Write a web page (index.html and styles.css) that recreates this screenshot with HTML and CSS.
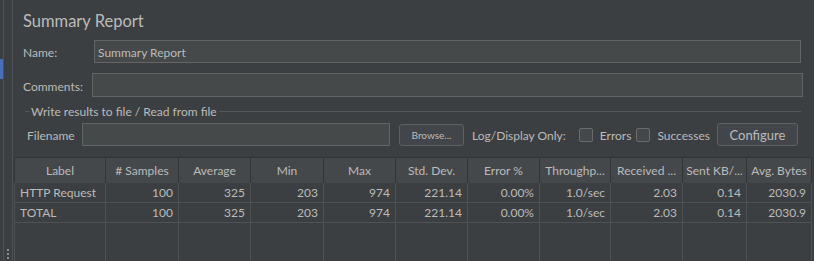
FILE: index.html
```html
<!DOCTYPE html>
<html>
<head>
<meta charset="utf-8">
<link rel="stylesheet" href="styles.css">
</head>
<body>
<div class="app">
  <div class="sidebar">
    <div class="side-line"><div class="side-top"></div><div class="side-sel"></div><div class="side-rest"></div></div>
    <div class="side-gap"><div class="dots"><span></span><span></span><span></span></div></div>
  </div>
  <div class="main">
    <div class="form">
      <div class="title">Summary Report</div>
      <div class="row row-name">
        <span class="lbl lbl-name">Name:</span>
        <div class="input input-name">Summary Report</div>
      </div>
      <div class="row row-comments">
        <span class="lbl lbl-comments">Comments:</span>
        <div class="input input-comments"></div>
      </div>
      <div class="group">
        <div class="legend"><span class="leg-tick"></span><span class="leg-text">Write results to file / Read from file</span><span class="leg-line"></span></div>
        <div class="row row-file">
          <span class="lbl lbl-file">Filename</span>
          <div class="input input-file"></div>
          <div class="btn btn-browse">Browse...</div>
          <span class="lbl lbl-log">Log/Display Only:</span>
          <span class="check"></span>
          <span class="lbl lbl-err">Errors</span>
          <span class="check"></span>
          <span class="lbl lbl-succ">Successes</span>
          <div class="btn btn-conf">Configure</div>
        </div>
      </div>
    </div>
    <div class="table-wrap">
      <table class="grid">
        <colgroup>
          <col style="width:91px"><col style="width:73px"><col style="width:72px"><col style="width:73px"><col style="width:72px"><col style="width:72px"><col style="width:72px"><col style="width:71px"><col style="width:72px"><col style="width:64px"><col style="width:65px">
        </colgroup>
        <thead>
          <tr><th>Label</th><th># Samples</th><th>Average</th><th>Min</th><th>Max</th><th>Std. Dev.</th><th>Error %</th><th>Throughp...</th><th>Received ...</th><th>Sent KB/...</th><th>Avg. Bytes</th></tr>
        </thead>
        <tbody>
          <tr><td class="l">HTTP Request</td><td>100</td><td>325</td><td>203</td><td>974</td><td>221.14</td><td>0.00%</td><td>1.0/sec</td><td>2.03</td><td>0.14</td><td>2030.9</td></tr>
          <tr><td class="l">TOTAL</td><td>100</td><td>325</td><td>203</td><td>974</td><td>221.14</td><td>0.00%</td><td>1.0/sec</td><td>2.03</td><td>0.14</td><td>2030.9</td></tr>
          <tr class="filler"><td></td><td></td><td></td><td></td><td></td><td></td><td></td><td></td><td></td><td></td><td></td></tr>
        </tbody>
      </table>
    </div>
  </div>
</div>
</body>
</html>
```

FILE: styles.css
```css
html, body {
  margin: 0;
  padding: 0;
  background: #3c3f41;
}
body {
  width: 814px;
  height: 261px;
  overflow: hidden;
  font-family: Lato, "Noto Sans", sans-serif;
  font-size: 12px;
  color: #bbbbbb;
}
.app {
  display: flex;
  height: 261px;
}
.sidebar {
  width: 12px;
  display: flex;
  border-right: 1px solid #4e5153;
}
.side-line {
  width: 3px;
  display: flex;
  flex-direction: column;
  border-right: 1px solid #4e5153;
}
.side-top { height: 59px; }
.side-sel { height: 20px; background: #4a6fb5; }
.side-rest { flex: 1; }
.side-gap {
  flex: 1;
  display: flex;
  flex-direction: column;
  justify-content: flex-end;
  align-items: center;
}
.dots {
  display: flex;
  flex-direction: column;
  gap: 2px;
  padding-bottom: 2px;
}
.dots span {
  width: 2px;
  height: 2px;
  background: #8a8d8f;
}
.main {
  flex: 1;
  display: flex;
  flex-direction: column;
  min-width: 0;
}
.form {
  padding: 0 0 0 10px;
}
.title {
  font-size: 16.5px;
  height: 24px;
  line-height: 24px;
  margin-top: 9px;
}
.row {
  display: flex;
  align-items: center;
}
.row-name { margin-top: 7px; height: 23px; }
.row-comments { margin-top: 10px; height: 24px; }
.lbl { white-space: nowrap; padding-top: 2px; }
.lbl-name { width: 71px; }
.lbl-comments { width: 69px; }
.input {
  box-sizing: border-box;
  height: 23px;
  background: #45494a;
  border: 1px solid #646464;
  line-height: 22px;
  padding-left: 3px;
  padding-top: 1px;
}
.input-name { width: 707px; }
.input-comments { width: 711px; height: 24px; }
.group {
  margin-top: 8px;
  padding-left: 2px;
}
.legend {
  display: flex;
  align-items: center;
  height: 12px;
  width: 776px;
}
.leg-tick { width: 4px; height: 1px; background: #545759; margin-right: 2px; }
.leg-text { line-height: 12px; padding-top: 1px; }
.leg-line { flex: 1; height: 1px; background: #545759; margin-left: 2px; }
.row-file {
  margin-top: 6px;
  height: 23px;
  padding-left: 2px;
}
.lbl-file { width: 55px; }
.input-file { width: 308px; }
.btn {
  box-sizing: border-box;
  height: 22px;
  border: 1px solid #5e6162;
  border-radius: 3px;
  background: #42464a;
  display: flex;
  align-items: center;
  justify-content: center;
}
.btn-browse {
  width: 65px;
  margin-left: 9px;
  font-size: 10px;
}
.lbl-log { margin-left: 8px; }
.check {
  box-sizing: border-box;
  width: 14px;
  height: 14px;
  border: 1px solid #6b6b6b;
  border-radius: 2px;
  background: #43494a;
  margin-left: 13px;
}
.lbl-err { margin-left: 7px; }
.lbl-err + .check { margin-left: 5px; }
.lbl-succ { margin-left: 7px; }
.btn-conf {
  width: 81px;
  height: 23px;
  margin-left: 7px;
  font-size: 13px;
}
.table-wrap {
  margin-top: 11px;
  margin-left: 1px;
  flex: 1;
  display: flex;
  flex-direction: column;
}
.grid {
  border-collapse: collapse;
  table-layout: fixed;
  width: 797px;
  height: 100%;
}
.grid th {
  height: 25px;
  background: #45484a;
  font-weight: normal;
  text-align: center;
  border-top: 1px solid #323436;
  border-left: 1px solid #323436;
  border-right: 1px solid #323436;
  padding: 0;
  white-space: nowrap;
  overflow: hidden;
}
.grid td {
  height: 19px;
  padding: 0 5px 0 5px;
  text-align: right;
  border-left: 1px solid #4f5254;
  border-right: 1px solid #4f5254;
  border-bottom: 1px solid #4f5254;
  white-space: nowrap;
  overflow: hidden;
}
.grid td.l { text-align: left; }
.grid tr.filler td {
  height: auto;
  border-bottom: none;
}
```
